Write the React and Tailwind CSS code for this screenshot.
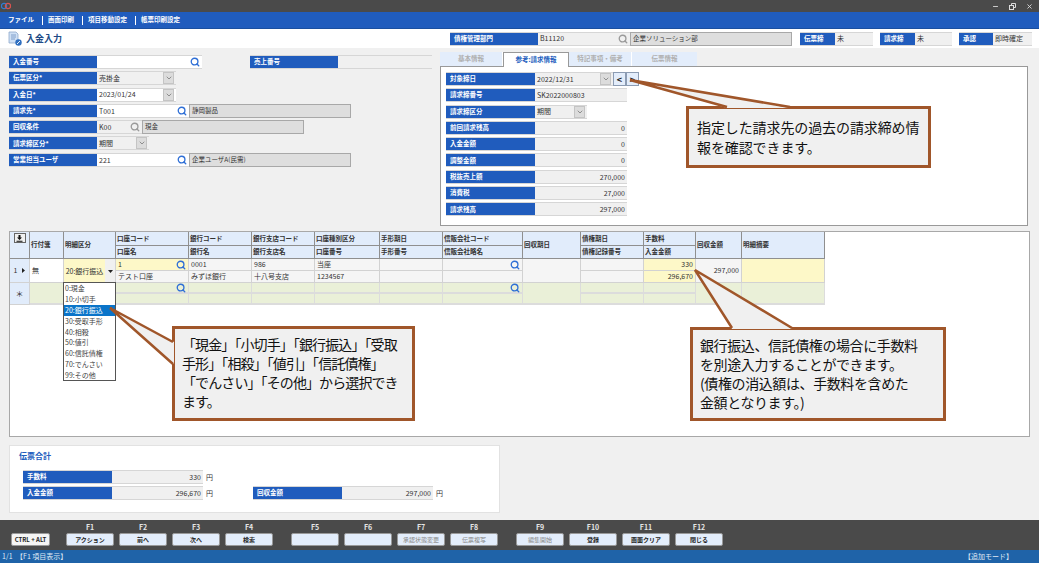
import React from "react";
import { Search, ChevronDown, Minus, X } from "lucide-react";

const jp = "font-['Noto_Sans_CJK_JP','Noto_Sans',sans-serif]";

const Mag = ({ gray }) => (
  <Search size={10} strokeWidth={3.2} className={gray ? "text-[#9a9a9a] shrink-0" : "text-[#2f6fd6] shrink-0"} />
);

const Arrow = () => (
  <span className="w-[11px] h-full flex items-center justify-center bg-[#dcdcdc] border border-[#c4c4c4] shrink-0">
    <ChevronDown size={8} className="text-[#666]" />
  </span>
);

const Label = ({ w = "w-[88px]", children }) => (
  <div className={`${w} h-full bg-[#205cbd] text-white text-[6.5px] font-bold flex items-center pl-[4px] shrink-0 whitespace-nowrap`}>
    {children}
  </div>
);

// ラベル + 値の1行
const Field = ({ label, lw, w, value, right, white, mag, grayMag, select, name, nameW }) => (
  <div className="flex h-[14px] items-stretch">
    <div className={`flex h-full ${w} border-y border-[#d6d6d6]`}>
      <Label w={lw}>{label}</Label>
      <div className={`flex-1 h-full flex items-center gap-[2px] px-[2px] text-[7px] text-[#333] whitespace-nowrap ${white ? "bg-white" : "bg-[#f0f0f0]"} ${right ? "justify-end" : "justify-between"}`}>
        <span>{value}</span>
        {mag && <Mag gray={grayMag} />}
        {select && <Arrow />}
      </div>
    </div>
    {name && (
      <div className={`${nameW} h-full bg-[#dedede] border border-[#a8a8a8] flex items-center px-[2px] text-[6.5px] text-[#333] whitespace-nowrap`}>
        {name}
      </div>
    )}
  </div>
);

const Callout = ({ className, children }) => (
  <div className={`absolute bg-[#f0f0f0] border-[3px] border-[#a0562a] text-[#111] ${className}`}>{children}</div>
);

const columns = [
  { w: "w-[73px]", head: ["口座コード", "口座名"], r1: ["1", "テスト口座"], yellowTop: true, mag: true },
  { w: "w-[63px]", head: ["銀行コード", "銀行名"], r1: ["0001", "みずほ銀行"] },
  { w: "w-[63px]", head: ["銀行支店コード", "銀行支店名"], r1: ["986", "十八号支店"] },
  { w: "w-[65px]", head: ["口座種別区分", "口座番号"], r1: ["当座", "1234567"] },
  { w: "w-[63px]", head: ["手形期日", "手形番号"], r1: ["", ""] },
  { w: "w-[80px]", head: ["信販会社コード", "信販会社略名"], r1: ["", ""], mag: true },
  { w: "w-[58px]", one: "回収期日" },
  { w: "w-[63px]", head: ["債権期日", "債権記録番号"], r1: ["", ""] },
  { w: "w-[52px]", head: ["手数料", "入金金額"], r1: ["330", "296,670"], yellow: true, right: true },
  { w: "w-[46px]", one: "回収金額", value: "297,000" },
  { w: "w-[83px]", one: "明細摘要", yellow: true },
];

const heads = "bg-[#e1ecfb] border-r border-b border-[#8f8f8f] text-[6.5px] font-bold text-[#333] flex items-center px-[1px] whitespace-nowrap";
const cell = "border-r border-b border-[#d2d2d2] text-[7px] text-[#333] flex items-center px-[2px] whitespace-nowrap";
const green = "bg-[#eaf0d8] border-r border-b-2 border-[#dcdcdc]";

const GridColumn = ({ c }) => (
  <div className={`${c.w} flex flex-col shrink-0`}>
    {c.one ? (
      <div className={`${heads} h-[27px]`}>{c.one}</div>
    ) : (
      <>
        <div className={`${heads} h-[14px]`}>{c.head[0]}</div>
        <div className={`${heads} h-[13px]`}>{c.head[1]}</div>
      </>
    )}
    {c.one ? (
      <div className={`${cell} h-[24px] justify-end ${c.yellow ? "bg-[#fdf8c8]" : "bg-[#f5f5f5]"}`}>{c.value}</div>
    ) : (
      <>
        <div className={`${cell} h-[12px] ${c.right ? "justify-end" : "justify-between"} ${c.yellow || c.yellowTop ? "bg-[#fdf8c8]" : "bg-[#f5f5f5]"}`}>
          <span>{c.r1[0]}</span>
          {c.mag && <Mag />}
        </div>
        <div className={`${cell} h-[12px] ${c.right ? "justify-end" : ""} ${c.yellow ? "bg-[#fdf8c8]" : "bg-[#f5f5f5]"}`}>{c.r1[1]}</div>
      </>
    )}
    {c.one ? (
      <div className={`${green} h-[22px]`} />
    ) : (
      <>
        <div className={`${green} h-[11px] flex items-center justify-end pr-[2px]`}>{c.mag && <Mag />}</div>
        <div className={`${green} h-[11px]`} />
      </>
    )}
  </div>
);

const fkeys = [
  ["F1", "アクション", 1],
  ["F2", "前へ", 1],
  ["F3", "次へ", 1],
  ["F4", "検索", 1],
  null,
  ["F5", "", 1],
  ["F6", "", 1],
  ["F7", "承認状態変更", 0],
  ["F8", "伝票複写", 0],
  null,
  ["F9", "編集開始", 0],
  ["F10", "登録", 1],
  ["F11", "画面クリア", 1],
  ["F12", "閉じる", 1],
];

const options = ["0:現金", "10:小切手", "20:銀行振込", "30:受取手形", "40:相殺", "50:値引", "60:信託債権", "70:でんさい", "99:その他"];

const rightRows = [
  ["前回請求残高", "0"],
  ["入金金額", "0"],
  ["調整金額", "0"],
  ["税抜売上額", "270,000"],
  ["消費税", "27,000"],
  ["請求残高", "297,000"],
];

export default function App() {
  return (
    <div className={`relative w-[1039px] h-[563px] overflow-hidden flex flex-col bg-[#f0f0f0] ${jp}`}>
      {/* title bar */}
      <div className="h-[12px] bg-[#4a4a4a] flex items-center justify-between pr-[6px] shrink-0">
        <svg width="10" height="8" viewBox="0 0 10 8" className="ml-[1px]">
          <circle cx="3" cy="4" r="2.6" fill="none" stroke="#2f7fd6" strokeWidth="1.3" />
          <circle cx="7" cy="4" r="2.6" fill="none" stroke="#d9534f" strokeWidth="1.3" />
        </svg>
        <div className="flex items-center gap-[10px] text-[#ddd]">
          <Minus size={7} strokeWidth={3} />
          <svg width="7" height="7" viewBox="0 0 7 7" fill="none" stroke="#ddd">
            <rect x="0.5" y="2.5" width="4" height="4" />
            <path d="M2.5 2.5v-2h4v4h-2" />
          </svg>
          <X size={7} strokeWidth={3} />
        </div>
      </div>

      {/* menu */}
      <div className="h-[17px] bg-[#205cbd] border-b border-[#1a4f9f] flex items-center pl-[8px] text-white text-[6.5px] font-bold shrink-0">
        <span>ファイル</span>
        <span className="w-px h-[9px] bg-white ml-[8px] mr-[5px]" />
        <span>画面印刷</span>
        <span className="w-px h-[9px] bg-white ml-[8px] mr-[5px]" />
        <span>項目移動設定</span>
        <span className="w-px h-[9px] bg-white ml-[8px] mr-[5px]" />
        <span>帳票印刷設定</span>
      </div>

      {/* page title */}
      <div className="h-[19px] bg-white flex items-center pl-[8px] shrink-0">
        <svg width="14" height="15" viewBox="0 0 14 15" className="mr-[4px] shrink-0">
          <path d="M1 1h7l2 2v9H1z" fill="#cfe0f5" stroke="#8fa9cc" strokeWidth="0.8" />
          <path d="M3 4h5M3 6h5M3 8h4" stroke="#6d8fbf" strokeWidth="0.8" />
          <circle cx="10.5" cy="11.5" r="3.2" fill="#2f6fc0" />
          <path d="M9 13l3-3" stroke="#fff" strokeWidth="0.9" />
        </svg>
        <span className="w-[36px] text-[9px] font-bold text-[#204a86] whitespace-nowrap">入金入力</span>
        <div className="ml-[388px] flex">
          <Field label="債権管理部門" w="w-[180px]" value="B11120" mag grayMag name="企業ソリューション部" nameW="w-[162px]" />
          <div className="ml-[8px]"><Field label="伝票締" lw="w-[35px]" w="w-[73px]" value="未" /></div>
          <div className="ml-[7px]"><Field label="請求締" lw="w-[35px]" w="w-[72px]" value="未" /></div>
          <div className="ml-[7px]"><Field label="承認" lw="w-[34px]" w="w-[73px]" value="即時確定" /></div>
        </div>
      </div>

      {/* main */}
      <div className="flex-1 flex flex-col pt-[4px]">
        <div className="flex h-[174px]">
          <div className="w-[440px] pl-[9px] pt-[3px] flex flex-col gap-[2.3px] shrink-0">
            <div className="flex gap-[48px]">
              <Field label="入金番号" w="w-[193px]" value="" white mag />
              <Field label="売上番号" w="w-[182px]" value="" />
            </div>
            <Field label="伝票区分*" w="w-[167px]" value="売掛金" select />
            <Field label="入金日*" w="w-[167px]" value="2023/01/24" white select />
            <Field label="請求先*" w="w-[180px]" value="T001" white mag name="静岡製品" nameW="w-[162px]" />
            <Field label="回収条件" w="w-[133px]" value="K00" mag grayMag name="現金" nameW="w-[162px]" />
            <Field label="請求締区分*" w="w-[140px]" value="期間" select />
            <Field label="営業担当ユーザ" w="w-[180px]" value="221" white mag name="企業ユーザA(民需)" nameW="w-[162px]" />
          </div>

          <div className="w-[588px] flex flex-col">
            <div className="flex h-[14px] text-[6.5px] font-bold text-[#b0b0b0] shrink-0">
              <div className="w-[63px] bg-[#e3edfb] flex items-center justify-center border-r border-white">基本情報</div>
              <div className="w-[66px] h-[15px] bg-white border border-b-0 border-[#999] text-[#205cbd] flex items-center justify-center z-10">参考:請求情報</div>
              <div className="w-[63px] bg-[#e3edfb] flex items-center justify-center border-r border-white">特記事項・備考</div>
              <div className="w-[65px] bg-[#e3edfb] flex items-center justify-center">伝票情報</div>
            </div>
            <div className="flex-1 bg-white border border-[#999] pl-[5px] pt-[5px] flex flex-col gap-[2.3px]">
              <div className="flex">
                <Field label="対象締日" lw="w-[89px]" w="w-[167px]" value="2022/12/31" select />
                <span className="w-[13px] h-[14px] bg-[#e3edfb] border border-[#8c9cb3] text-[9px] font-bold text-[#222] flex items-center justify-center leading-none">&lt;</span>
                <span className="w-[13px] h-[14px] bg-[#e3edfb] border border-[#8c9cb3] text-[9px] font-bold text-[#222] flex items-center justify-center leading-none">&gt;</span>
              </div>
              <Field label="請求締番号" lw="w-[89px]" w="w-[181px]" value="SK2022000803" />
              <Field label="請求締区分" lw="w-[89px]" w="w-[141px]" value="期間" select />
              {rightRows.map(([l, v]) => (
                <Field key={l} label={l} lw="w-[89px]" w="w-[181px]" value={v} right />
              ))}
            </div>
          </div>
        </div>

        {/* detail grid */}
        <div className="mt-[5px] ml-[9px] w-[1021px] h-[206px] bg-white border border-[#a8a8a8] flex items-start">
          <div className="w-[20px] flex flex-col shrink-0">
            <div className={`${heads} h-[27px] items-start justify-center pt-[1px]`}>
              <span className="w-[12px] h-[10px] bg-[#f0f0f0] border border-[#666] flex items-center justify-center">
                <svg width="7" height="7" viewBox="0 0 7 7"><path d="M2.500 0h2v2.500H6L3.500 5 1 2.500h1.500zM0.500 5.800h6v1h-6z" fill="#111" /></svg>
              </span>
            </div>
            <div className="h-[24px] bg-[#e1ecfb] border-r border-b border-[#d2d2d2] text-[7px] text-[#333] flex items-center justify-center gap-[5px]">
              1<svg width="3" height="5" viewBox="0 0 3 5"><path d="M0 0l3 2.500L0 5z" fill="#222" /></svg>
            </div>
            <div className="h-[22px] bg-[#e1ecfb] border-r border-b border-[#d2d2d2] text-[8px] text-[#333] flex items-center justify-center">＊</div>
          </div>
          <div className="w-[34px] flex flex-col shrink-0">
            <div className={`${heads} h-[27px]`}>行付箋</div>
            <div className={`${cell} h-[24px] bg-white`}>無</div>
            <div className={`${green} h-[22px]`} />
          </div>
          <div className="w-[52px] flex flex-col shrink-0">
            <div className={`${heads} h-[27px]`}>明細区分</div>
            <div className="h-[24px] flex border-r border-[#d2d2d2]">
              <span className="flex-1 bg-[#fdf8c8] text-[7px] text-[#333] flex items-center justify-center whitespace-nowrap">20:銀行振込</span>
              <span className="w-[10px] bg-[#f0f0f0] flex items-center justify-center">
                <svg width="5" height="3" viewBox="0 0 5 3"><path d="M0 0h5L2.500 3z" fill="#222" /></svg>
              </span>
            </div>
            <div className={`${green} h-[22px]`} />
          </div>
          {columns.map((c) => (
            <GridColumn key={c.w + (c.one || c.head[0])} c={c} />
          ))}
        </div>

        {/* totals */}
        <div className="mt-[8px] ml-[9px] w-[491px] h-[68px] bg-white border border-[#e2e2e2] pl-[13px] pt-[3px] flex flex-col">
          <span className="ml-[-4px] text-[8px] font-bold text-[#205cbd] leading-[14px]">伝票合計</span>
          <div className="mt-[7px] flex items-center gap-[3px] h-[14px]">
            <Field label="手数料" lw="w-[89px]" w="w-[180px]" value="330" right />
            <span className="text-[7px] text-[#333]">円</span>
          </div>
          <div className="mt-[2px] flex items-center h-[14px]">
            <Field label="入金金額" lw="w-[89px]" w="w-[180px]" value="296,670" right />
            <span className="ml-[3px] w-[47px] text-[7px] text-[#333]">円</span>
            <Field label="回収金額" lw="w-[89px]" w="w-[180px]" value="297,000" right />
            <span className="ml-[3px] text-[7px] text-[#333]">円</span>
          </div>
        </div>
      </div>

      {/* function keys */}
      <div className="h-[30px] bg-[#4a4a4a] flex items-end gap-[5px] pl-[11px] pb-[4px] shrink-0">
        <div className="w-[39px] h-[13px] bg-[#f5f5f5] border border-[#999] rounded-[2px] text-[6px] font-bold text-[#222] flex items-center justify-center mr-[11px] whitespace-nowrap">CTRL + ALT</div>
        {fkeys.map((k, i) =>
          k ? (
            <div key={k[0]} className="w-[48px] flex flex-col items-center">
              <span className="text-[7px] font-bold text-[#e6e6e6] leading-[11px]">{k[0]}</span>
              <div className={`w-full h-[13px] bg-[#e3edfb] border border-[#999] rounded-[2px] text-[6px] flex items-center justify-center whitespace-nowrap ${k[2] ? "font-bold text-[#222]" : "text-[#888]"}`}>
                {k[1]}
              </div>
            </div>
          ) : (
            <div key={i} className="w-[8px]" />
          )
        )}
      </div>

      {/* status */}
      <div className="h-[13px] bg-[#1f63a8] flex items-center justify-between pl-[2px] pr-[26px] text-[7px] text-[#dfe9f5] shrink-0">
        <span>1/1　【F1 項目表示】</span>
        <span>【追加モード】</span>
      </div>

      {/* dropdown */}
      <div className="absolute left-[63px] top-[282px] w-[53px] h-[99px] bg-white border border-[#555] flex flex-col text-[7px] text-[#444]">
        {options.map((o) => (
          <span key={o} className={`h-[10.9px] leading-[11px] pl-[1px] whitespace-nowrap ${o.startsWith("20") ? "bg-[#0a74c9] text-white" : ""}`}>{o}</span>
        ))}
      </div>

      {/* callouts */}
      <Callout className="left-[686px] top-[106px] w-[245px] h-[62px] pl-[8px] pt-[8px] text-[14px] leading-[20px] tracking-[-0.1px]">
        指定した請求先の過去の請求締め情<br />報を確認できます。
      </Callout>
      <Callout className="left-[172px] top-[326px] w-[243px] h-[95px] pl-[7px] pt-[6px] text-[14px] leading-[19px] tracking-[-0.9px]">
        「現金」「小切手」「銀行振込」「受取<br />手形」「相殺」「値引」「信託債権」<br />「でんさい」「その他」から選択でき<br />ます。
      </Callout>
      <Callout className="left-[690px] top-[327px] w-[256px] h-[94px] pl-[7px] pt-[6px] text-[14px] leading-[19px] tracking-[-0.4px]">
        銀行振込、信託債権の場合に手数料<br />を別途入力することができます。<br />(債権の消込額は、手数料を含めた<br />金額となります。)
      </Callout>

      {/* callout pointers */}
      <svg className="absolute inset-0 pointer-events-none" width="1039" height="563" viewBox="0 0 1039 563">
        <polygon points="630,80 727,108 790,108" fill="#f0f0f0" />
        <polyline points="727,107 630,80 790,107" fill="none" stroke="#a0562a" strokeWidth="2.5" />
        <polygon points="110,308 174,342 174,364" fill="#f0f0f0" />
        <polyline points="173,342 110,308 173,364" fill="none" stroke="#a0562a" strokeWidth="2.5" />
        <polygon points="695,270 732,329 792,329" fill="#f0f0f0" />
        <polyline points="732,328 695,270 792,328" fill="none" stroke="#a0562a" strokeWidth="2.5" />
      </svg>
    </div>
  );
}
